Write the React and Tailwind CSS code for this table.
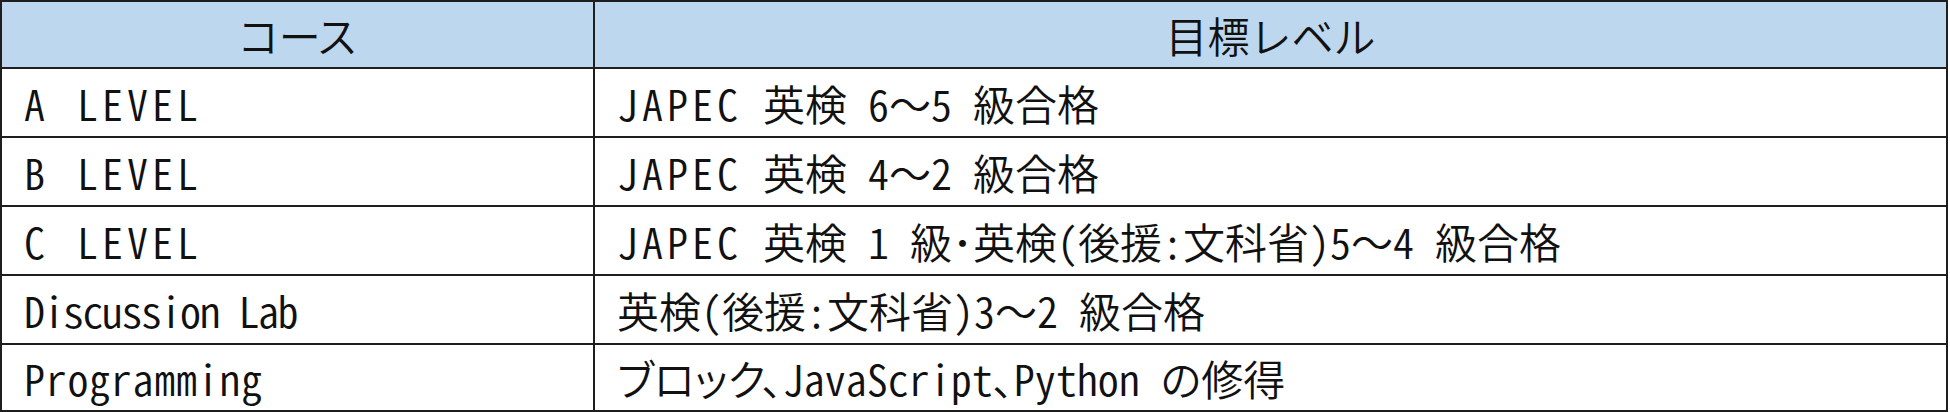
const P = ({ children }) => (
  <span className="[font-feature-settings:'palt']">{children}</span>
)

const Caps = ({ children }) => <span className="tracking-[4px]">{children}</span>

// full-width wave dash, kept out of the half-width feature
const W = () => <span className="[font-feature-settings:normal]">～</span>

const Level = ({ letter }) => (
  <>
    <span>{letter}</span>
    <span className="ml-[32px] tracking-[4px]">LEVEL</span>
  </>
)

const rows = [
  {
    course: <Level letter="A" />,
    goal: (
      <>
        <Caps>JAPEC</Caps> 英検 6<W />5 級合格
      </>
    ),
  },
  {
    course: <Level letter="B" />,
    goal: (
      <>
        <Caps>JAPEC</Caps> 英検 4<W />2 級合格
      </>
    ),
  },
  {
    course: <Level letter="C" />,
    goal: (
      <>
        <Caps>JAPEC</Caps> 英検 1 級･英検(後援:文科省)5<W />4 級合格
      </>
    ),
  },
  {
    course: <span className="tracking-[-1.5px]">Discussion Lab</span>,
    goal: (
      <>
        英検(後援:文科省)3<W />2 級合格
      </>
    ),
  },
  {
    course: <span className="tracking-[0.7px]">Programming</span>,
    goal: (
      <>
        <P>ブロック、</P>JavaScript<P>、</P>Python <P>の</P>修得
      </>
    ),
  },
]

const line = 'border-[#1e1e1e]'

export default function App() {
  return (
    <div className="w-[1950px] h-[412px] bg-white">
      <div
        className={`w-[1948px] h-[412px] border-2 ${line} grid grid-cols-[593px_1fr] grid-rows-[67px_69px_69px_69px_69px_65px] text-[42px] font-[350] leading-none text-[#111] font-['Noto_Sans_CJK_JP',sans-serif] [font-feature-settings:'hwid']`}
      >
        <div className={`bg-[#bdd7ee] border-r-2 border-b-2 ${line} flex items-center justify-center`}>
          <P>コース</P>
        </div>
        <div className={`bg-[#bdd7ee] border-b-2 ${line} flex items-center justify-center`}>
          目標レベル
        </div>
        {rows.map((row, i) => {
          const last = i === rows.length - 1
          return [
            <div
              key={'c' + i}
              className={`border-r-2 ${line} flex items-center pl-[22px] whitespace-pre ${last ? '' : 'border-b-2'}`}
            >
              {row.course}
            </div>,
            <div
              key={'g' + i}
              className={`${line} flex items-center pl-[22px] whitespace-pre ${last ? '' : 'border-b-2'}`}
            >
              <span>{row.goal}</span>
            </div>,
          ]
        })}
      </div>
    </div>
  )
}
